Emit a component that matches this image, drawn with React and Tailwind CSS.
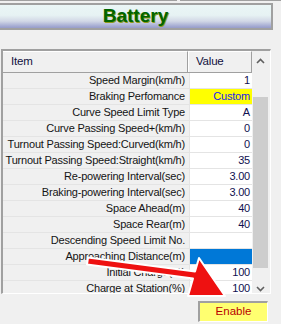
import React from "react";

const rows = [
  ["Speed Margin(km/h)", "1"],
  ["Braking Perfomance", "Custom", "yellow"],
  ["Curve Speed Limit Type", "A"],
  ["Curve Passing Speed+(km/h)", "0"],
  ["Turnout Passing Speed:Curved(km/h)", "0"],
  ["Turnout Passing Speed:Straight(km/h)", "35"],
  ["Re-powering Interval(sec)", "3.00"],
  ["Braking-powering Interval(sec)", "3.00"],
  ["Space Ahead(m)", "40"],
  ["Space Rear(m)", "40"],
  ["Descending Speed Limit No.", ""],
  ["Approaching Distance(m)", "", "blue"],
  ["Initial Charge(%)", "100"],
  ["Charge at Station(%)", "100"],
];

function Chevron({ up }) {
  return (
    <svg width="9" height="6" viewBox="0 0 9 6">
      <polyline
        points={up ? "1,5 4.5,1.5 8,5" : "1,1 4.5,4.5 8,1"}
        fill="none"
        stroke="#606060"
        strokeWidth="1.6"
      />
    </svg>
  );
}

export default function App() {
  return (
    <div
      className="relative w-[281px] h-[324px] overflow-hidden bg-[#f0f0f0] text-[11px] tracking-[-0.2px]"
      style={{ fontFamily: '"Liberation Sans", Arial, sans-serif' }}
    >
      <div className="flex h-[1px]">
        <div className="w-[177px] bg-[#a0a0a0]" />
        <div className="w-[3px]" />
        <div className="flex-1 bg-[#a0a0a0]" />
      </div>

      <div className="mt-[2px] -ml-[2px] w-[275px] h-[27px] border-2 border-[#a0a0a0] bg-[linear-gradient(to_bottom,#eaf6f6_0%,#e6f2f3_45%,#d2d8e6_70%,#a4aad2_92%,#969cc8_100%)] flex items-center justify-center">
        <span className="text-[19px] font-bold tracking-normal text-[#006400] [text-shadow:1px_1px_0_#8f9a1a]">
          Battery
        </span>
      </div>

      <div className="mt-[19px] ml-[1px] w-[270px] h-[245px] border-t-2 border-l-2 border-[#a0a0a0] border-b border-r border-b-white border-r-white flex overflow-hidden">
        <div className="w-[249px] flex flex-col">
          <div className="flex h-[22px] shrink-0 border-b border-[#a0a0a0] bg-[#f0f0f0] text-[#101040] text-[11.5px]">
            <div className="w-[185px] border-r border-[#a0a0a0] flex items-center pl-[8px] border-t border-t-white">
              Item
            </div>
            <div className="w-[1px] bg-white" />
            <div className="flex-1 flex items-center pl-[7px] border-t border-t-white border-r border-r-[#a0a0a0]">
              Value
            </div>
          </div>
          {rows.map(([label, value, kind]) => (
            <div key={label} className="flex h-[16px] shrink-0">
              <div className="w-[186px] bg-[#f0f0f0] border-b border-[#e4e4e4] text-right pr-[4px] leading-[15px] text-[#141414] whitespace-nowrap">
                {label}
              </div>
              <div className="w-[1px] bg-[#e4e4e4]" />
              <div
                className={
                  "flex-1 text-right pr-[2px] leading-[15px] border-b border-[#e4e4e4] " +
                  (kind === "yellow"
                    ? "bg-[#ffff00] text-[#2222ee]"
                    : kind === "blue"
                    ? "bg-[#0078d7] text-white"
                    : "bg-white text-[#101050]")
                }
              >
                {value}
              </div>
            </div>
          ))}
        </div>
        <div className="w-[17px] flex flex-col bg-[#f0f0f0]">
          <div className="h-[20px] shrink-0 flex items-center justify-center">
            <Chevron up />
          </div>
          <div className="h-[26px] shrink-0" />
          <div className="h-[171px] shrink-0 mx-[1px] bg-[#cdcdcd]" />
          <div className="h-[12px] shrink-0" />
          <div className="h-[17px] shrink-0 flex items-center justify-center">
            <Chevron />
          </div>
        </div>
      </div>

      <div className="mt-[7px] ml-[198px] w-[70px] h-[21px] border-t-2 border-l-2 border-[#a0a0a0] border-r border-b border-r-white border-b-white bg-[#ffff70] flex items-center justify-center text-[#b80000] text-[11.5px] tracking-normal">
        Enable
      </div>

      <svg
        className="absolute inset-0 pointer-events-none"
        width="281"
        height="324"
        viewBox="0 0 281 324"
      >
        <polygon
          points="88,257.5 195,271.5 199,258 225,296 188,296 193,278.5 87,264.5"
          fill="#ee1111"
          stroke="white"
          strokeWidth="2"
          strokeLinejoin="round"
        />
      </svg>
    </div>
  );
}
